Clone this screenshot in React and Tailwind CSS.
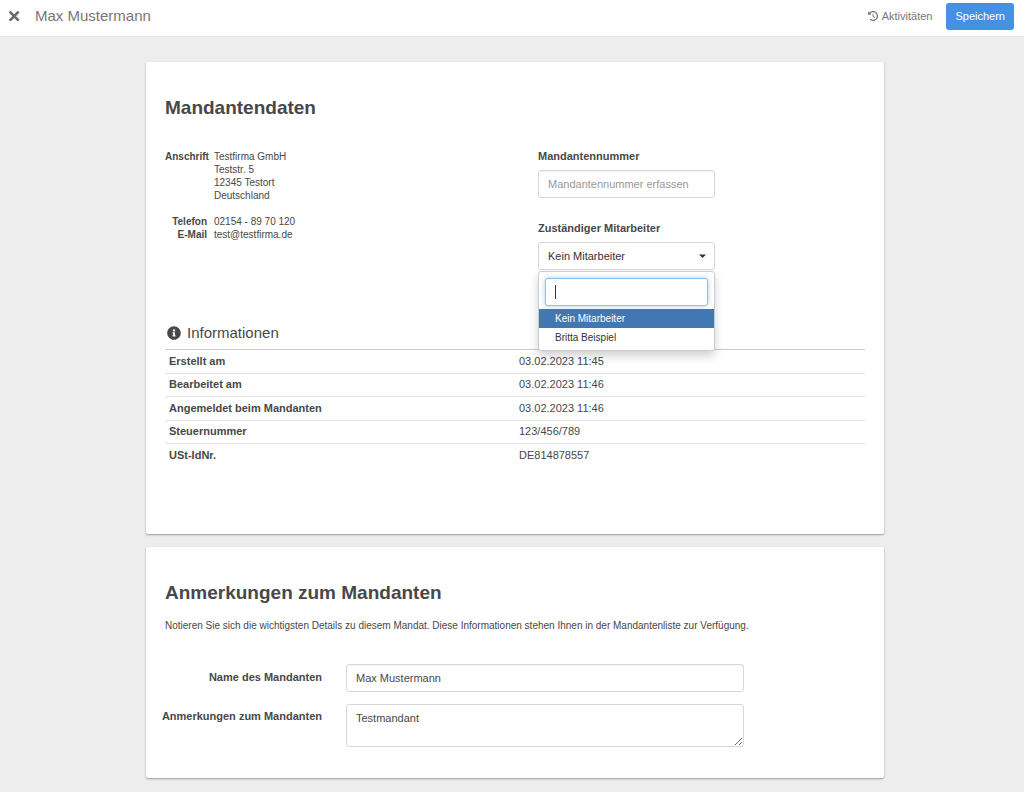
import { useState } from "react";
import { FaInfoCircle } from "react-icons/fa";
import { FaClockRotateLeft } from "react-icons/fa6";

const employees = ["Kein Mitarbeiter", "Britta Beispiel"];

const infoRows = [
  ["Erstellt am", "03.02.2023 11:45"],
  ["Bearbeitet am", "03.02.2023 11:46"],
  ["Angemeldet beim Mandanten", "03.02.2023 11:46"],
  ["Steuernummer", "123/456/789"],
  ["USt-IdNr.", "DE814878557"],
];

const inputClass =
  "block h-7 w-full rounded-[3px] border border-[#d8d8d8] bg-white px-[9px] text-[11px] text-[#484848] placeholder:text-[#999] shadow-[inset_0_1px_1px_rgba(0,0,0,0.05)] outline-none focus:border-[#66afe9]";

function Header() {
  return (
    <header className="flex h-[37px] items-center justify-between border-b border-[#e6e6e6] bg-white pt-1 pr-[10px] pb-2 pl-2">
      <div className="flex items-center gap-[15px] text-[#777]">
        <button type="button" aria-label="Schließen" className="cursor-pointer">
          <svg className="size-3" viewBox="0 0 12 12" fill="none" stroke="#6b6b6b" strokeWidth="2.7" strokeLinecap="round">
            <path d="M2.4 2.4 9.9 9.9M9.9 2.4 2.4 9.9" />
          </svg>
        </button>
        <h1 className="text-[15px]">Max Mustermann</h1>
      </div>
      <div className="flex items-center gap-[14px] text-[11px]">
        <a href="#aktivitaeten" className="flex items-center gap-1 text-[#777]">
          <FaClockRotateLeft className="size-[10px]" />
          Aktivitäten
        </a>
        <button
          type="submit"
          form="mandant"
          className="h-[27px] cursor-pointer rounded-[3px] bg-[#4690e4] px-[9px] text-white"
        >
          Speichern
        </button>
      </div>
    </header>
  );
}

function EmployeeSelect() {
  const [open, setOpen] = useState(true);
  const [selected, setSelected] = useState(employees[0]);
  const [query, setQuery] = useState("");

  const matches = employees.filter((name) => name.toLowerCase().includes(query.toLowerCase()));

  const toggle = (e) => {
    e.preventDefault();
    setOpen(!open);
  };

  const choose = (name) => {
    setSelected(name);
    setQuery("");
    setOpen(false);
  };

  return (
    <div className="relative">
      <select
        id="mitarbeiter"
        value={selected}
        onMouseDown={toggle}
        onChange={(e) => setSelected(e.target.value)}
        className="block h-7 w-full appearance-none rounded-[3px] border border-[#d8d8d8] bg-white px-[9px] text-[11px] text-[#333]"
      >
        {employees.map((name) => (
          <option key={name}>{name}</option>
        ))}
      </select>
      <svg className="pointer-events-none absolute top-3 right-[9px] h-[4px] w-[7px]" viewBox="0 0 7 4" fill="#333">
        <path d="M0 0.5h7L3.5 4z" />
      </svg>

      {open && (
        <div className="absolute top-full z-10 mt-px w-full rounded-[3px] border border-[#ccc] bg-white pt-[6px] pb-[3px] shadow-[0_5px_10px_rgba(0,0,0,0.18)]">
          <div className="relative mx-[6px] mb-[3px]">
            <input
              type="text"
              aria-label="Mitarbeiter suchen"
              autoFocus
              value={query}
              onChange={(e) => setQuery(e.target.value)}
              className="block h-7 w-full rounded-[3px] border border-[#d4d4d4] bg-white px-[10px] text-[11px] text-[#333] caret-transparent outline-none focus:border-[#8fc1ee] focus:shadow-[0_0_5px_rgba(102,175,233,0.6)]"
            />
            {!query && <span className="pointer-events-none absolute top-[7px] left-[10px] h-[14px] w-px bg-[#333]" />}
          </div>
          <ul>
            {matches.map((name) => (
              <li key={name}>
                <button
                  type="button"
                  onClick={() => choose(name)}
                  className={`block h-[19px] w-full cursor-pointer px-4 text-left text-[10px] ${
                    name === selected ? "bg-[#4178b4] text-white" : "text-[#333] hover:bg-gray-100"
                  }`}
                >
                  {name}
                </button>
              </li>
            ))}
          </ul>
        </div>
      )}
    </div>
  );
}

function ContactData() {
  return (
    <dl className="grid grid-cols-[42px_1fr] content-start gap-x-[7px] text-[10px] leading-[13px]">
      <dt className="text-right font-bold">Anschrift</dt>
      <dd className="mb-[13px]">
        Testfirma GmbH
        <br />
        Teststr. 5
        <br />
        12345 Testort
        <br />
        Deutschland
      </dd>
      <dt className="text-right font-bold">Telefon</dt>
      <dd>02154 - 89 70 120</dd>
      <dt className="text-right font-bold">E-Mail</dt>
      <dd>test@testfirma.de</dd>
    </dl>
  );
}

function InfoTable() {
  return (
    <>
      <h3 className="flex items-center gap-[6px] pl-[2px] text-[15px] leading-5">
        <FaInfoCircle className="size-[14px]" />
        Informationen
      </h3>
      <table className="mt-[6px] w-full table-fixed border-t border-[#ccc] text-[11px] leading-4">
        <tbody>
          {infoRows.map(([label, value]) => (
            <tr key={label} className="border-b border-[#e2e2e2] last:border-b-0 odd:h-6 even:h-[23px]">
              <th scope="row" className="px-1 pb-[2px] text-left font-bold">
                {label}
              </th>
              <td className="px-1 pb-[2px]">{value}</td>
            </tr>
          ))}
        </tbody>
      </table>
    </>
  );
}

function Card({ title, children }) {
  return (
    <section className="rounded-[2px] bg-white px-[19px] pt-[33px] shadow-[0_1px_2px_rgba(0,0,0,0.35)]">
      <h2 className="text-[19px] leading-[26px] font-bold">{title}</h2>
      {children}
    </section>
  );
}

export default function App() {
  const [name, setName] = useState("Max Mustermann");
  const [notes, setNotes] = useState("Testmandant");

  return (
    <div className="min-h-screen bg-[#ededed] font-['Liberation_Sans',Arial,sans-serif] text-[#484848]">
      <Header />
      <main className="pr-3 pb-3 pl-[18px]">
        <form
          id="mandant"
          onSubmit={(e) => e.preventDefault()}
          className="mx-auto flex max-w-[738px] flex-col gap-[13px] pt-[25px]"
        >
          <Card title="Mandantendaten">
            <div className="mt-[29px] grid grid-cols-2">
              <ContactData />
              <div className="pl-[23px]">
                <div className="w-[177px]">
                  <label htmlFor="nummer" className="mb-[7px] block text-[11px] leading-[13px] font-bold">
                    Mandantennummer
                  </label>
                  <input id="nummer" type="text" placeholder="Mandantennummer erfassen" className={inputClass} />
                  <label
                    htmlFor="mitarbeiter"
                    className="mt-6 mb-[7px] block text-[11px] leading-[13px] font-bold"
                  >
                    Zuständiger Mitarbeiter
                  </label>
                  <EmployeeSelect />
                </div>
              </div>
            </div>
            <div className="mt-[53px] pb-[66px]">
              <InfoTable />
            </div>
          </Card>

          <Card title="Anmerkungen zum Mandanten">
            <p className="mt-3 text-[10px] leading-4">
              Notieren Sie sich die wichtigsten Details zu diesem Mandat. Diese Informationen stehen Ihnen in der
              Mandantenliste zur Verfügung.
            </p>
            <div className="mt-[30px] -ml-1 grid grid-cols-[161px_398px] gap-x-6 gap-y-3 pb-[31px]">
              <label htmlFor="name" className="pt-[5px] text-right text-[11px] leading-4 font-bold">
                Name des Mandanten
              </label>
              <input
                id="name"
                type="text"
                value={name}
                onChange={(e) => setName(e.target.value)}
                className={inputClass}
              />
              <label htmlFor="notizen" className="pt-1 text-right text-[11px] leading-4 font-bold">
                Anmerkungen zum Mandanten
              </label>
              <textarea
                id="notizen"
                value={notes}
                onChange={(e) => setNotes(e.target.value)}
                className="block h-[43px] w-full resize rounded-[3px] border border-[#d8d8d8] px-[9px] py-[5px] text-[11px] leading-4 text-[#484848] outline-none focus:border-[#66afe9]"
              />
            </div>
          </Card>
        </form>
      </main>
    </div>
  );
}
